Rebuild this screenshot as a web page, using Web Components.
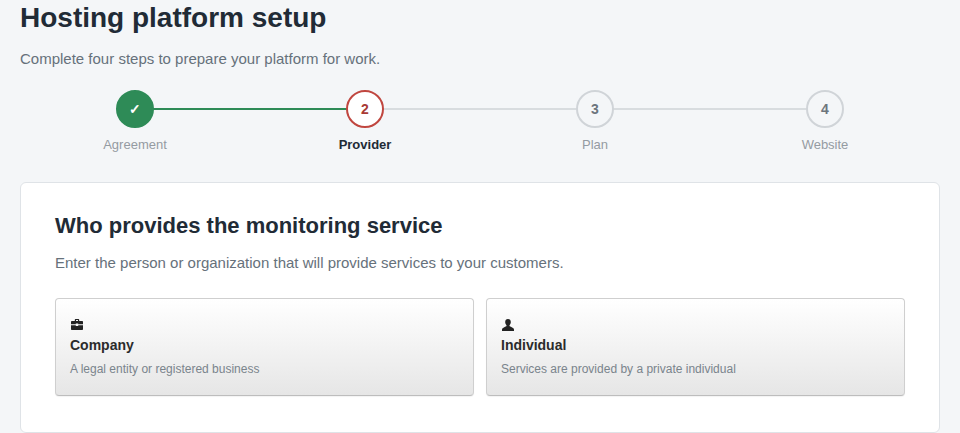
<!DOCTYPE html>
<html lang="en"><head><meta charset="utf-8"><title>Hosting platform setup</title>
<style>
html,body{margin:0;height:433px;overflow:hidden;background:#f4f6f8}
body{font-family:"Liberation Sans",Arial,sans-serif;color:#212b32}
</style></head><body>
<setup-page>
  <span slot="title">Hosting platform setup</span>
  <span slot="sub">Complete four steps to prepare your platform for work.</span>
  <setup-stepper slot="stepper">
    <setup-step state="done" label="Agreement" mark="✓"></setup-step>
    <setup-step state="current" label="Provider" mark="2"></setup-step>
    <setup-step label="Plan" mark="3"></setup-step>
    <setup-step label="Website" mark="4"></setup-step>
  </setup-stepper>
  <setup-card slot="card">
    <span slot="heading">Who provides the monitoring service</span>
    <span slot="lead">Enter the person or organization that will provide services to your customers.</span>
    <choice-tile>
      <svg slot="icon" width="12" height="11" viewBox="0 0 12 11" fill="#222"><path d="M3.800 2V1C3.800.4 4.200 0 4.800 0h2.400c.6 0 1 .4 1 1v1H11c.6 0 1 .4 1 1v2.300H7.200v-.7H4.800v.7H0V3c0-.6.4-1 1-1zM5 2h2v-.9H5zM0 6.200h4.800v.7h2.400v-.7H12V10c0 .6-.4 1-1 1H1c-.6 0-1-.4-1-1z"/></svg>
      <span slot="name">Company</span>
      <span slot="desc">A legal entity or registered business</span>
    </choice-tile>
    <choice-tile>
      <svg slot="icon" width="12" height="12" viewBox="0 0 12 12" fill="#222"><path d="M6 0c1.800 0 2.800 1.300 2.800 3.100 0 1.300-.5 2.400-1.300 3.100v.9c.2.500 1.100.7 2.200 1.200 1.300.5 2.300 1.100 2.300 2.500V12H0v-1.200c0-1.400 1-2 2.300-2.500 1.100-.5 2-.7 2.200-1.200v-.9C3.700 5.500 3.200 4.400 3.200 3.100 3.200 1.300 4.200 0 6 0z"/></svg>
      <span slot="name">Individual</span>
      <span slot="desc">Services are provided by a private individual</span>
    </choice-tile>
  </setup-card>
</setup-page>
<script>
function def(name, html, init){
  customElements.define(name, class extends HTMLElement{
    constructor(){super();this.attachShadow({mode:"open"}).innerHTML=html;}
    connectedCallback(){if(init)init(this);}
  });
}
def("setup-page",`<style>
:host{display:block;padding:0 20px}
h1{margin:0;font-size:28px;line-height:36px;font-weight:700;color:#212b36}
p{margin:12px 0 0;font-size:15px;line-height:22px;color:#66717b}
.st{margin-top:20px}
</style>
<h1><slot name="title"></slot></h1>
<p><slot name="sub"></slot></p>
<div class="st"><slot name="stepper"></slot></div>
<div><slot name="card"></slot></div>`);
def("setup-stepper",`<style>:host{display:grid;grid-template-columns:repeat(4,1fr)}</style><slot></slot>`);
def("setup-step",`<style>
:host{display:flex;flex-direction:column;align-items:center;position:relative;height:92px;font-size:13px;color:#949ba2}
.line{position:absolute;top:18px;left:50%;width:100%;height:2px;background:#d8dcdf}
:host([state=done]) .line{background:#2e8b57}
:host(:last-child) .line{display:none}
.dot{position:relative;box-sizing:border-box;width:38px;height:38px;border-radius:50%;border:2px solid #d0d4d8;background:#f4f6f8;display:flex;align-items:center;justify-content:center;font-size:14px;font-weight:700;color:#6c757d}
:host([state=done]) .dot{background:#2e8b57;border-color:#2e8b57;color:#fff}
:host([state=current]) .dot{background:#fff;border-color:#c0463f;color:#a83a34}
.lab{margin-top:9px;line-height:16px}
:host([state=current]) .lab{font-weight:700;color:#212b36}
</style><div class="line"></div><div class="dot"></div><div class="lab"></div>`,
el=>{const s=el.shadowRoot;s.querySelector(".dot").textContent=el.getAttribute("mark");s.querySelector(".lab").textContent=el.getAttribute("label");});
def("setup-card",`<style>
:host{display:block;box-sizing:border-box;background:#fff;border:1px solid #dfe3e7;border-radius:6px;padding:28px 34px 36px;height:251px}
h2{margin:0;font-size:22px;line-height:30px;font-weight:700;color:#212b36}
p{margin:11px 0 0;font-size:15px;line-height:22px;color:#66717b}
.g{display:grid;grid-template-columns:1fr 1fr;gap:12px;margin-top:24px}
</style><h2><slot name="heading"></slot></h2><p><slot name="lead"></slot></p><div class="g"><slot></slot></div>`);
def("choice-tile",`<style>
:host{display:flex;flex-direction:column;box-sizing:border-box;height:98px;padding:19px 14px 0;border:1px solid #cfcfcf;border-bottom-color:#bdbdbd;border-radius:4px;background:linear-gradient(#fff,#e6e6e6);box-shadow:0 1px 1px rgba(0,0,0,.05)}
.i{height:13px;display:flex;align-items:center;padding-left:1px}
.i ::slotted(svg){display:block}
.n{margin-top:4px;font-size:14px;line-height:20px;font-weight:700;color:#2b2b2b}
.d{margin-top:5px;font-size:12px;line-height:18px;color:#7a848c}
</style><div class="i"><slot name="icon"></slot></div><div class="n"><slot name="name"></slot></div><div class="d"><slot name="desc"></slot></div>`);
</script>
</body></html>
